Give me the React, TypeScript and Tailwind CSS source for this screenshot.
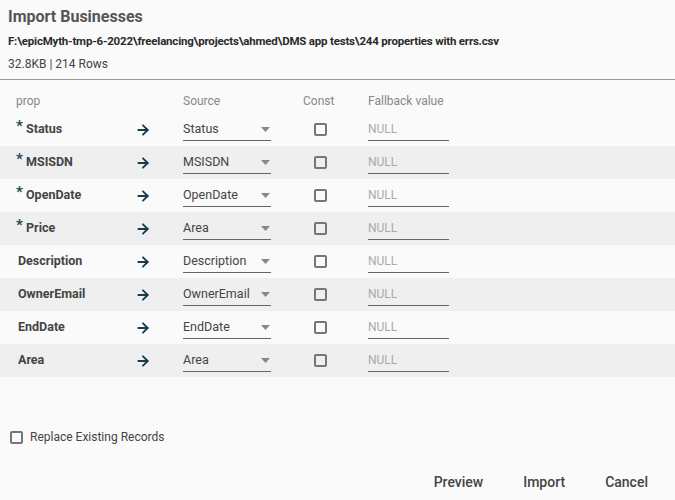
import { ArrowRight } from 'lucide-react'

const rows = [
  { prop: 'Status', source: 'Status', required: true },
  { prop: 'MSISDN', source: 'MSISDN', required: true },
  { prop: 'OpenDate', source: 'OpenDate', required: true },
  { prop: 'Price', source: 'Area', required: true },
  { prop: 'Description', source: 'Description', required: false },
  { prop: 'OwnerEmail', source: 'OwnerEmail', required: false },
  { prop: 'EndDate', source: 'EndDate', required: false },
  { prop: 'Area', source: 'Area', required: false },
]

function Checkbox() {
  return <span className="block w-[13px] h-[13px] border-2 border-[#767676] rounded-[2px]" />
}

export default function App() {
  return (
    <div
      className="w-[675px] h-[500px] bg-[#fafafa] text-[#444] flex flex-col overflow-hidden"
      style={{ fontFamily: 'Roboto, "Liberation Sans", sans-serif' }}
    >
      <div className="px-2 pt-[6px]">
        <h1 className="text-[16px] leading-[22px] font-bold text-[#555]">Import Businesses</h1>
        <p className="mt-[2px] text-[11.5px] tracking-[-0.2px] leading-[22px] font-bold text-[#2a2a2a]">
          F:\epicMyth-tmp-6-2022\freelancing\projects\ahmed\DMS app tests\244 properties with errs.csv
        </p>
        <p className="mt-[1px] text-[12px] leading-[22px] text-[#444]">32.8KB | 214 Rows</p>
      </div>
      <div className="mt-[4px] h-px bg-[#9a9a9a]" />

      <div className="mt-[12px] flex text-[12px] leading-[18px] text-[#888]">
        <span className="w-[183px] pl-[16px]">prop</span>
        <span className="w-[120px]">Source</span>
        <span className="w-[65px]">Const</span>
        <span>Fallback value</span>
      </div>

      <div className="mt-[3px]">
        {rows.map((r, i) => (
          <div
            key={r.prop}
            className={`flex items-center h-[33px] ${i % 2 === 1 ? 'bg-[#efefef]' : 'bg-[#fafafa]'}`}
          >
            <div className="w-[135px] pl-[16px] flex items-center">
              {r.required ? (
                <span className="w-[10px] text-[15px] leading-none font-bold text-[#1f4a5c] -mt-[6px]">*</span>
              ) : (
                <span className="w-[2px]" />
              )}
              <span className="text-[12.5px] font-bold text-[#444]">{r.prop}</span>
            </div>
            <div className="w-[48px] flex items-center">
              <ArrowRight size={16} strokeWidth={2.75} color="#1c3a4a" />
            </div>
            <div className="w-[88px] h-[22px] border-b border-[#666] flex items-center justify-between pr-[1px]">
              <span className="text-[12.5px] text-[#444]">{r.source}</span>
              <svg width="9" height="5" viewBox="0 0 9 5">
                <path d="M0 0 L9 0 L4.5 5 Z" fill="#888" />
              </svg>
            </div>
            <div className="w-[97px] pl-[43px] flex items-center -mt-[1px]">
              <Checkbox />
            </div>
            <div className="w-[81px] h-[22px] border-b border-[#666] flex items-center">
              <span className="text-[12px] text-[#aaa]">NULL</span>
            </div>
          </div>
        ))}
      </div>

      <label className="mt-[51px] ml-[10px] flex items-center gap-[7px]">
        <Checkbox />
        <span className="text-[12px] text-[#444]">Replace Existing Records</span>
      </label>

      <div className="mt-[26px] flex justify-end pr-[27px] gap-[40px] text-[14px] font-medium text-[#444]">
        <button>Preview</button>
        <button>Import</button>
        <button>Cancel</button>
      </div>
    </div>
  )
}
